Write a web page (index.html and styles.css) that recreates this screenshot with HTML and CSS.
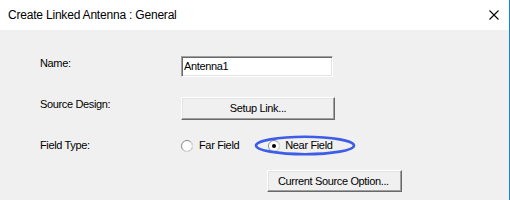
FILE: index.html
```html
<!DOCTYPE html>
<html lang="en">
<head>
    <meta charset="UTF-8">
    <title>Create Linked Antenna : General</title>
    <link rel="stylesheet" href="styles.css">
</head>
<body>
<div class="window">
    <div class="titlebar">
        <span class="title">Create Linked Antenna : General</span>
        <svg class="close" width="10" height="10" viewBox="0 0 10 10">
            <path d="M0.5 0.5 L9.5 9.5 M9.5 0.5 L0.5 9.5" stroke="#000" stroke-width="1.1" fill="none"/>
        </svg>
    </div>
    <div class="content">
        <div class="row row-name">
            <span class="label">Name:</span>
            <div class="textbox">Antenna1</div>
        </div>
        <div class="row row-source">
            <span class="label">Source Design:</span>
            <div class="button setup">Setup Link...</div>
        </div>
        <div class="row row-field">
            <span class="label">Field Type:</span>
            <span class="option far">
                <svg class="radio" width="12" height="12" viewBox="0 0 12 12">
                    <circle cx="6" cy="6" r="5.5" fill="#fff" stroke="#8a8a8a"/>
                    <path d="M9.9 2.1 A5.5 5.5 0 0 1 2.1 9.9" stroke="#e6e6e6" fill="none"/>
                </svg>
                Far Field
            </span>
            <span class="option near">
                <svg class="radio" width="12" height="12" viewBox="0 0 12 12">
                    <circle cx="6" cy="6" r="5.5" fill="#fff" stroke="#8a8a8a"/>
                    <path d="M9.9 2.1 A5.5 5.5 0 0 1 2.1 9.9" stroke="#e6e6e6" fill="none"/>
                    <circle cx="6" cy="6" r="2" fill="#000"/>
                </svg>
                Near Field
                <svg class="ring" width="102" height="21" viewBox="0 0 102 21">
                    <ellipse cx="51" cy="10.5" rx="49" ry="8.7" stroke="#3d5ce8" stroke-width="2.6" fill="none"/>
                </svg>
            </span>
        </div>
        <div class="row row-option">
            <div class="button current">Current Source Option...</div>
        </div>
    </div>
</div>
</body>
</html>
```

FILE: styles.css
```css
*{
    margin: 0;
    padding: 0;
    box-sizing: border-box;
}
body{
    font-family: "Liberation Sans", Arial, sans-serif;
    color: #000000;
    background: #f0f0f0;
}
.window{
    width: 510px;
    height: 200px;
    border-right: 1px solid #1883d7;
    overflow: hidden;
}
.titlebar{
    height: 30px;
    background: #ffffff;
    display: flex;
    align-items: center;
    justify-content: space-between;
    padding: 0 10px 0 8px;
}
.title{
    font-size: 12px;
    letter-spacing: -0.2px;
}
.close{
    display: block;
}
.content{
    height: 170px;
    background: #f0f0f0;
    padding: 26px 0 0 40px;
    font-size: 11px;
    letter-spacing: -0.35px;
}
.row{
    display: flex;
    align-items: flex-start;
}
.label{
    width: 141px;
    line-height: 13px;
    margin-top: 1px;
}
.textbox{
    width: 152px;
    height: 21px;
    background: #ffffff;
    border: 1px solid;
    border-color: #a0a0a0 #ffffff #ffffff #a0a0a0;
    box-shadow: inset 1px 1px #696969, inset -1px -1px #e3e3e3;
    padding: 3px 0 0 2px;
    line-height: 13px;
}
.button{
    height: 23px;
    background: #f0f0f0;
    border: 1px solid;
    border-color: #ffffff #696969 #696969 #ffffff;
    box-shadow: inset -1px -1px #a0a0a0, inset 1px 1px #e3e3e3;
    display: flex;
    align-items: center;
    justify-content: center;
    line-height: 13px;
}
.row-source{
    margin-top: 20px;
}
.setup{
    width: 154px;
}
.row-field{
    margin-top: 16px;
    height: 19px;
}
.row-field .label{
    margin-top: 3px;
}
.option{
    height: 19px;
    display: flex;
    align-items: center;
    line-height: 13px;
}
.radio{
    display: block;
    margin-right: 6px;
}
.far{
    margin-right: 29px;
}
.near{
    position: relative;
}
.near .radio{
    margin-right: 5px;
}
.ring{
    position: absolute;
    left: -14px;
    top: -1px;
}
.row-option{
    margin-top: 15px;
    padding-left: 227px;
}
.current{
    width: 135px;
    height: 22px;
    justify-content: flex-start;
    padding-left: 10px;
}
```
